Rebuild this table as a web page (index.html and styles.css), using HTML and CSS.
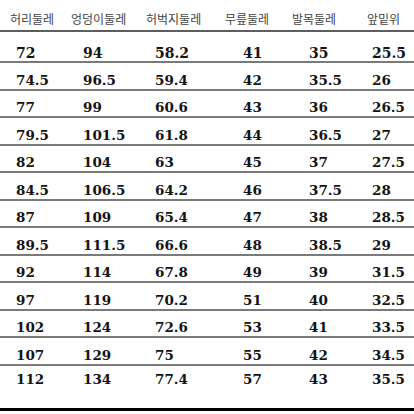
FILE: index.html
```html
<!DOCTYPE html>
<html lang="ko">
<head>
<meta charset="utf-8">
<link rel="stylesheet" href="styles.css">
</head>
<body>
<div class="sheet">
  <div class="head">
    <span>허리둘레</span><span>엉덩이둘레</span><span>허벅지둘레</span><span>무릎둘레</span><span>발목둘레</span><span>앞밑위</span>
  </div>
  <div class="row first"><span>72</span><span>94</span><span>58.2</span><span>41</span><span>35</span><span>25.5</span></div>
  <div class="row"><span>74.5</span><span>96.5</span><span>59.4</span><span>42</span><span>35.5</span><span>26</span></div>
  <div class="row"><span>77</span><span>99</span><span>60.6</span><span>43</span><span>36</span><span>26.5</span></div>
  <div class="row"><span>79.5</span><span>101.5</span><span>61.8</span><span>44</span><span>36.5</span><span>27</span></div>
  <div class="row"><span>82</span><span>104</span><span>63</span><span>45</span><span>37</span><span>27.5</span></div>
  <div class="row"><span>84.5</span><span>106.5</span><span>64.2</span><span>46</span><span>37.5</span><span>28</span></div>
  <div class="row"><span>87</span><span>109</span><span>65.4</span><span>47</span><span>38</span><span>28.5</span></div>
  <div class="row"><span>89.5</span><span>111.5</span><span>66.6</span><span>48</span><span>38.5</span><span>29</span></div>
  <div class="row"><span>92</span><span>114</span><span>67.8</span><span>49</span><span>39</span><span>31.5</span></div>
  <div class="row"><span>97</span><span>119</span><span>70.2</span><span>51</span><span>40</span><span>32.5</span></div>
  <div class="row"><span>102</span><span>124</span><span>72.6</span><span>53</span><span>41</span><span>33.5</span></div>
  <div class="row"><span>107</span><span>129</span><span>75</span><span>55</span><span>42</span><span>34.5</span></div>
  <div class="row last"><span>112</span><span>134</span><span>77.4</span><span>57</span><span>43</span><span>35.5</span></div>
  <div class="rule"></div>
</div>
</body>
</html>
```

FILE: styles.css
```css
html, body {
  margin: 0;
  padding: 0;
  background: #fff;
}

.sheet {
  width: 414px;
  height: 414px;
  overflow: hidden;
  background: #fff;
}

.head {
  display: grid;
  grid-template-columns: 61px 75px 79px 67px 75px 1fr;
  padding: 10.5px 0 0 10px;
  height: 32px;
  box-sizing: border-box;
  border-bottom: 2px solid #5e5e5e;
  font-family: "Noto Sans CJK KR", "Noto Sans", sans-serif;
  font-size: 12px;
  line-height: 16px;
  color: #444;
  white-space: nowrap;
}

.row {
  display: grid;
  grid-template-columns: 67px 72px 88px 66px 63px 1fr;
  padding: 8.5px 0 0 16px;
  height: 27.5px;
  box-sizing: border-box;
  border-bottom: 2px solid #7a7a7a;
  font-family: "DejaVu Serif", "Liberation Serif", serif;
  font-weight: bold;
  font-size: 13.5px;
  line-height: 16px;
  color: #141414;
  white-space: nowrap;
}

.row.first {
  height: 31px;
  padding-top: 13px;
  font-size: 14px;
}

.row.last {
  height: 42.5px;
  padding-top: 5px;
  border-bottom: none;
}

.rule {
  height: 3px;
  background: #000;
}
```
